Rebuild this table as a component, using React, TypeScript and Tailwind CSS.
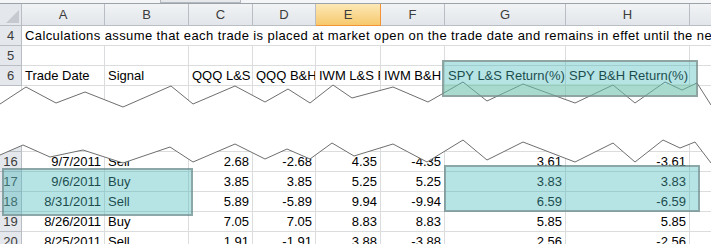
import React from 'react';

const colW = [
  'w-[83px]', 'w-[84px]', 'w-[64px]', 'w-[63px]', 'w-[65px]',
  'w-[64px]', 'w-[121px]', 'w-[124px]', 'w-[60px]',
];
const letters = ['A', 'B', 'C', 'D', 'E', 'F', 'G', 'H', 'I'];

const rows = [
  { n: 15, v: ['', '', '', '', '', '', '', ''] },
  { n: 16, v: ['9/7/2011', 'Sell', '2.68', '-2.68', '4.35', '-4.35', '3.61', '-3.61'] },
  { n: 17, v: ['9/6/2011', 'Buy', '3.85', '3.85', '5.25', '5.25', '3.83', '3.83'] },
  { n: 18, v: ['8/31/2011', 'Sell', '5.89', '-5.89', '9.94', '-9.94', '6.59', '-6.59'] },
  { n: 19, v: ['8/26/2011', 'Buy', '7.05', '7.05', '8.83', '8.83', '5.85', '5.85'] },
  { n: 20, v: ['8/25/2011', 'Sell', '1.91', '-1.91', '3.88', '-3.88', '2.56', '-2.56'] },
];

const headings = [
  'Trade Date', 'Signal', 'QQQ L&S Return(%)', 'QQQ B&H Return(%)',
  'IWM L&S Return(%)', 'IWM B&H Return(%)', 'SPY L&S Return(%)', 'SPY B&H Return(%)', '',
];

// torn-paper edges
const tearTop = [
  [0, 104], [26, 87], [56, 103], [85, 92], [123, 107], [171, 86], [193, 104], [235, 86],
  [265, 102], [288, 89], [310, 103], [333, 85], [352, 98], [393, 87], [428, 102], [463, 82],
  [487, 101], [523, 84], [575, 103], [613, 85], [635, 103], [665, 82], [682, 90], [697, 83], [711, 105],
];
const tearBottom = [
  [0, 155], [23, 145], [50, 157], [83, 150], [123, 163], [170, 147], [193, 162], [235, 144],
  [265, 159], [287, 149], [310, 159], [332, 143], [354, 156], [393, 144], [427, 162], [463, 140],
  [487, 160], [523, 142], [575, 162], [613, 143], [635, 162], [663, 140], [680, 148], [695, 142], [711, 163],
];
const pts = (a: number[][]) => a.map((p) => p.join(',')).join(' ');

function RowNum({ n }: { n?: number }) {
  return (
    <div className="w-[22px] shrink-0 h-[20px] bg-[#e4e7eb] border-r border-b border-[#b9bec5] text-center text-[#3c3c3c] leading-[19px]">
      {n}
    </div>
  );
}

export default function App() {
  return (
    <div className="relative w-[711px] h-[244px] overflow-hidden bg-white font-['Liberation_Sans',Arial,sans-serif] text-[13px] text-black">

      {/* ── Formula bar edge ───────────────────── */}
      <div className="h-[4px] bg-[#f4f5f7] border-b border-[#9ca2a9] flex">
        <div className="ml-[160px] w-[81px] h-[3px] bg-[#e6e8eb] border-x border-b border-[#b3b8be]" />
      </div>

      {/* ── Column headers ─────────────────────── */}
      <div className="flex h-[22px]">
        <div className="w-[22px] shrink-0 bg-[#e4e7eb] border-r border-b border-[#b9bec5] flex items-end justify-end p-[2px]">
          <svg width="13" height="13" viewBox="0 0 13 13">
            <polygon points="13,0 13,13 0,13" fill="#c6cad0" />
          </svg>
        </div>
        {colW.map((w, i) => (
          <div
            key={i}
            className={
              i === 4
                ? `${w} shrink-0 text-center leading-[21px] text-[#3c3c3c] border-r border-b border-[#f29436] bg-gradient-to-b from-[#fce8b6] to-[#f7c96b]`
                : `${w} shrink-0 text-center leading-[21px] text-[#3c3c3c] border-r border-b border-[#b9bec5] bg-gradient-to-b from-[#f1f3f5] to-[#e2e6ea]`
            }
          >
            {i < 8 ? letters[i] : ''}
          </div>
        ))}
      </div>

      {/* ── Top rows ───────────────────────────── */}
      <div className="flex">
        <RowNum n={4} />
        <div className="flex-1 h-[20px] border-b border-[#dadcdd] pl-[3px] leading-[19px] tracking-[0.4px] whitespace-nowrap overflow-hidden">
          Calculations assume that each trade is placed at market open on the trade date and remains in effet until the next signal
        </div>
      </div>
      <div className="flex">
        <RowNum n={5} />
        {colW.map((w, i) => (
          <div key={i} className={`${w} shrink-0 h-[20px] border-r border-b border-[#dadcdd]`} />
        ))}
      </div>
      <div className="flex">
        <RowNum n={6} />
        {colW.map((w, i) => (
          <div key={i} className={`${w} shrink-0 h-[20px] border-r border-b border-[#dadcdd] pl-[3px] leading-[19px] whitespace-nowrap overflow-hidden`}>
            {headings[i]}
          </div>
        ))}
      </div>
      <div className="flex">
        <div className="w-[22px] shrink-0 h-[20px] border-r border-[#dadcdd]" />
        {colW.map((w, i) => (
          <div key={i} className={`${w} shrink-0 h-[20px] border-r border-[#dadcdd]`} />
        ))}
      </div>

      <div className="h-[26px]" />

      {/* ── Bottom rows ────────────────────────── */}
      {rows.map((r) => (
        <div key={r.n} className="flex">
          <RowNum n={r.n === 15 ? undefined : r.n} />
          {colW.map((w, i) => (
            <div
              key={i}
              className={`${w} shrink-0 h-[20px] border-r border-b border-[#dadcdd] px-[3px] leading-[19px] whitespace-nowrap overflow-hidden ${i === 1 ? 'text-left' : 'text-right'}`}
            >
              {r.v[i] ?? ''}
            </div>
          ))}
        </div>
      ))}

      {/* ── Torn-paper gap ─────────────────────── */}
      <svg className="absolute left-0 top-0" width="711" height="244" viewBox="0 0 711 244">
        <polygon
          points={`-2,104 ${pts(tearTop)} 713,105 713,163 ${pts([...tearBottom].reverse())} -2,155`}
          fill="#ffffff"
        />
        <polyline points={pts(tearTop)} fill="none" stroke="#6e6e6e" strokeWidth="1" />
        <polyline points={pts(tearBottom)} fill="none" stroke="#6e6e6e" strokeWidth="1" />
      </svg>

      {/* ── Highlight boxes ────────────────────── */}
      <div className="absolute left-[442px] top-[60px] w-[256px] h-[37px] border-2 border-[#7d8a86]/70 bg-[#48b8bb]/40 flex flex-col justify-end">
        <div className="h-[11px] bg-[#8cc79a]/30" />
      </div>
      <div className="absolute left-[2px] top-[168px] w-[191px] h-[48px] border-2 border-[#6f7f80]/60 bg-[#48b8bb]/40" />
      <div className="absolute left-[444px] top-[165px] w-[256px] h-[47px] border-2 border-[#6f7f80]/60 bg-[#48b8bb]/40" />
    </div>
  );
}
